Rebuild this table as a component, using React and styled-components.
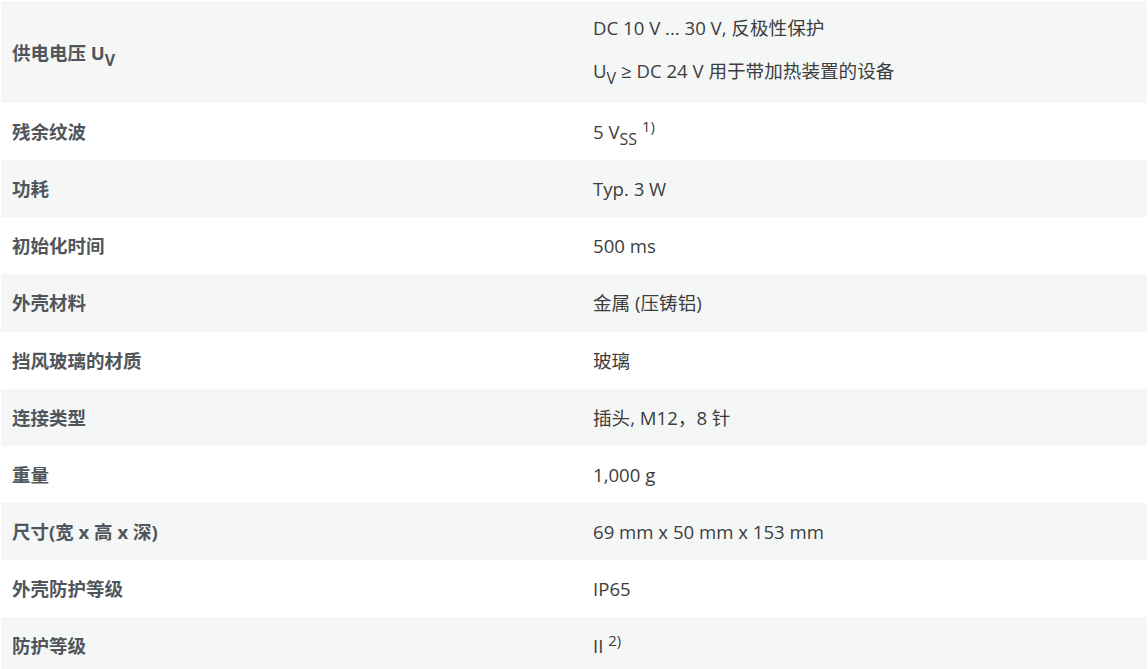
import React from "react";
import styled, { createGlobalStyle } from "styled-components";

const GlobalStyle = createGlobalStyle`
  body {
    margin: 0;
    background: #fff;
    font-family: "Open Sans", "Noto Sans CJK SC", sans-serif;
  }
`;

const Table = styled.div`
  padding: 1px 1px 0 1px;
`;

const Row = styled.div`
  display: grid;
  grid-template-columns: 581px 1fr;
  background: ${(p) => (p.$shaded ? "#f5f7f7" : "#fff")};
`;

const Label = styled.div`
  display: flex;
  align-items: center;
  padding: 15px 11px;
  font-size: 18.5px;
  line-height: 27.1px;
  font-weight: 700;
  color: #50565b;
`;

const Value = styled.div`
  display: flex;
  flex-direction: column;
  justify-content: center;
  gap: 16px;
  padding: ${(p) => (p.$multi ? "13px 11px 19px" : "15px 11px")};
  font-size: 18.6px;
  line-height: 27.1px;
  color: #3d3d3d;
`;

const Line = styled.p`
  margin: 0;
`;

const Sub = styled.sub`
  font-size: 0.86em;
  vertical-align: -0.38em;
  line-height: 0;
`;

const Sup = styled.sup`
  font-size: 0.8em;
  vertical-align: 0.45em;
  line-height: 0;
`;

const rows = [
  {
    label: (
      <>
        供电电压 U<Sub>V</Sub>
      </>
    ),
    values: [
      "DC 10 V ... 30 V, 反极性保护",
      <>
        U<Sub>V</Sub> ≥ DC 24 V 用于带加热装置的设备
      </>,
    ],
  },
  {
    label: "残余纹波",
    values: [
      <>
        5 V<Sub>SS</Sub> <Sup>1)</Sup>
      </>,
    ],
  },
  { label: "功耗", values: ["Typ. 3 W"] },
  { label: "初始化时间", values: ["500 ms"] },
  { label: "外壳材料", values: ["金属 (压铸铝)"] },
  { label: "挡风玻璃的材质", values: ["玻璃"] },
  { label: "连接类型", values: ["插头, M12，8 针"] },
  { label: "重量", values: ["1,000 g"] },
  { label: "尺寸(宽 x 高 x 深)", values: ["69 mm x 50 mm x 153 mm"] },
  { label: "外壳防护等级", values: ["IP65"] },
  {
    label: "防护等级",
    values: [
      <>
        II <Sup>2)</Sup>
      </>,
    ],
  },
];

const App = () => {
  return (
    <>
      <GlobalStyle />
      <Table>
        {rows.map((row, i) => (
          <Row key={i} $shaded={i % 2 === 0}>
            <Label>
              <span>{row.label}</span>
            </Label>
            <Value $multi={row.values.length > 1}>
              {row.values.map((v, j) => (
                <Line key={j}>{v}</Line>
              ))}
            </Value>
          </Row>
        ))}
      </Table>
    </>
  );
};

export default App;
